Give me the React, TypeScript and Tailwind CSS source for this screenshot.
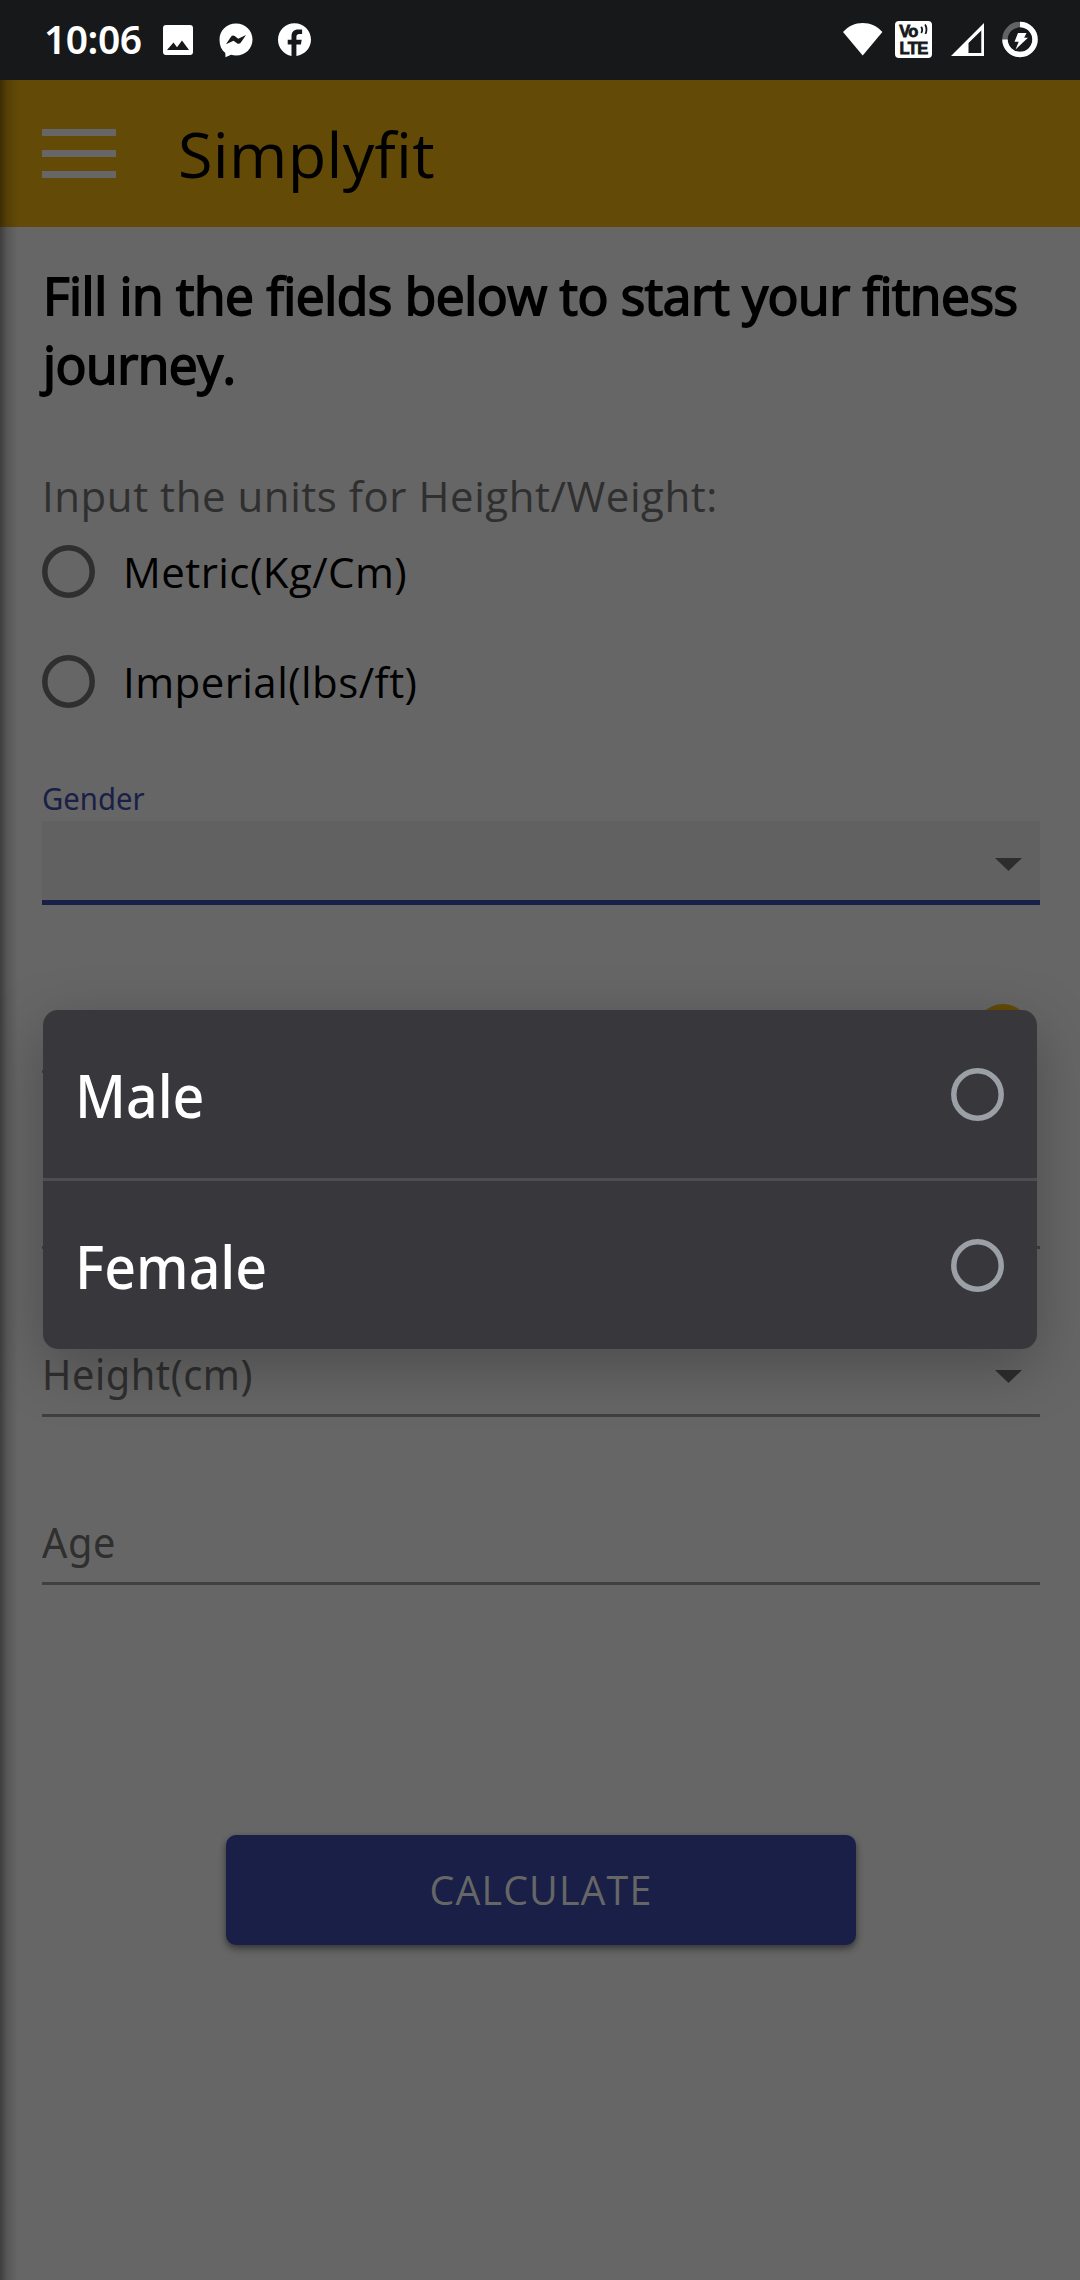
import React from "react";

function StatusBar() {
  return (
    <header className="flex h-[80px] items-start justify-between bg-[#16181a] pl-[44px] pr-[42px] text-white">
      <div className="flex items-start">
        <span className="w-[119px] whitespace-nowrap font-['Noto_Sans'] text-[39px] font-semibold leading-[78px] tracking-[-0.5px]">10:06</span>
        <svg className="mt-[25px]" width="30" height="30" viewBox="0 0 30 30">
          <path fill="#fff" fillRule="evenodd" d="M3 0h24a3 3 0 0 1 3 3v24a3 3 0 0 1-3 3H3a3 3 0 0 1-3-3V3a3 3 0 0 1 3-3ZM4 25h22L19 15.5l-5 6.7-3.500-4.700Z" />
        </svg>
        <svg className="ml-[26px] mt-[23px]" width="34" height="35" viewBox="0 0 34 35">
          <path fill="#fff" fillRule="evenodd" d="M17 0.500C26.500 .5 33.500 7.500 33.500 16.500S26.500 32.500 17 32.500c-1.800 0-3.500-.2-5-.7L6.500 34.200l-.2-4.200C2.500 27 .5 22.500 .5 16.500 .5 7.500 7.500 .5 17 .5ZM7 21.300l5-7.600c.9-1.300 2.500-1.500 3.700-.6l3.500 2.700 7.800-3.800-5.300 7.700c-.9 1.300-2.500 1.500-3.700.6l-3.500-2.600Z" />
        </svg>
        <svg className="ml-[25px] mt-[23px]" width="33" height="34" viewBox="0 0 33 34">
          <path fill="#fff" d="M33 16.700C33 7.500 25.600.2 16.500.2S0 7.500 0 16.700c0 8 5.700 14.600 13.500 16.300V21.500H9.700v-4.700h3.800v-3.200c0-4.600 2.500-7 6.600-7h4v4.400h-2.400c-2.500 0-3.300 1.100-3.300 3v2.800h5.300l-.8 4.700h-4.500V33C26.800 31.700 33 25 33 16.700Z" />
        </svg>
      </div>
      <div className="flex items-start">
        <svg className="mt-[22px]" width="40" height="34" viewBox="0 0 40 34">
          <path fill="#fff" d="M0 10C5.500 4 12 1 19.700 1S34 4 39.400 10L19.700 33.500Z" />
        </svg>
        <div className="ml-[12px] mt-[21px] flex h-[37px] w-[37px] flex-col items-center rounded-[4px] bg-white pt-px font-['Liberation_Sans'] text-[16.5px] font-bold leading-[18px] text-[#16181a] [-webkit-text-stroke:0.8px_#16181a]">
          <span className="flex h-[17px] items-center gap-[2px] tracking-[-0.8px]">
            Vo
            <svg className="-mt-[3px]" width="8" height="10" viewBox="0 0 7 9" fill="none" stroke="#16181a" strokeWidth="1.600">
              <path d="M1 2.500q1.700 3 0 5.500M4.500 .5q2.300 4 .3 8.500" />
            </svg>
          </span>
          <span className="h-[18px] tracking-[-0.6px]">LTE</span>
        </div>
        <svg className="ml-[19px] mt-[23px]" width="33" height="33" viewBox="0 0 33 33">
          <path fill="#fff" fillRule="evenodd" d="M33 0v33H0ZM30.300 7.500L17.500 20v10h12.800Z" />
        </svg>
        <svg className="ml-[18px] mt-[21px]" width="36" height="37" viewBox="0 0 36 37">
          <circle cx="18" cy="18.500" r="15" fill="none" stroke="#626365" strokeWidth="5.500" />
          <path d="M18 3.500a15 15 0 1 1-15 15" fill="none" stroke="#fff" strokeWidth="5.500" />
          <path fill="#fff" d="M16 12h8.500l-2.300 4.700H26L13.500 28.500l3.200-7.700H12.500Z" />
        </svg>
      </div>
    </header>
  );
}

function Caret({ className = "" }: { className?: string }) {
  return (
    <svg className={className} width="27" height="13" viewBox="0 0 27 13">
      <path fill="#2d2d2d" d="M0 0h27L13.500 13Z" />
    </svg>
  );
}

function Ring({ className }: { className: string }) {
  return (
    <svg className={className} width="53" height="53" viewBox="0 0 53 53" fill="none" stroke="currentColor" strokeWidth="5.500">
      <circle cx="26.500" cy="26.500" r="23.700" />
    </svg>
  );
}

function UnitOption({ label }: { label: string }) {
  return (
    <label className="flex h-[110px] items-center">
      <Ring className="text-[#2f2f2f]" />
      <span className="ml-[28px] pt-[2px] text-[42px] leading-[60px] tracking-[0.45px] text-black">{label}</span>
    </label>
  );
}

function Field({ label, caret = false }: { label: string; caret?: boolean }) {
  return (
    <div className="flex h-[168px] items-end justify-between border-b-[3px] border-[#404040]">
      <span className="origin-left scale-x-[0.945] pb-[16px] font-['Noto_Sans'] text-[42px] leading-[48px] tracking-[0.6px] text-[#2f2f2f]">{label}</span>
      {caret && <Caret className="mb-[31px] mr-[18px]" />}
    </div>
  );
}

function GenderOption({ label }: { label: string }) {
  return (
    <div className="flex h-[168px] items-center justify-between pl-[32px] pr-[33px]">
      <span className="origin-left scale-x-[0.94] pt-[2px] font-['Noto_Sans'] text-[59px] font-medium leading-[80px] text-white">{label}</span>
      <Ring className="text-[#9aa0a6]" />
    </div>
  );
}

export default function App() {
  return (
    <div className="relative h-[2280px] w-[1080px] overflow-hidden bg-[#666666] font-['Open_Sans',sans-serif]">
      <StatusBar />
      <nav className="flex h-[147px] items-center bg-[#634a07] pl-[42px]">
        <div className="flex w-[74px] flex-col gap-[14px]">
          <span className="h-[7px] bg-[#666666]" />
          <span className="h-[7px] bg-[#666666]" />
          <span className="h-[7px] bg-[#666666]" />
        </div>
        <h1 className="ml-[62px] text-[63px] leading-[84px] tracking-[0.3px] text-black">Simplyfit</h1>
      </nav>
      <main className="flex flex-col px-[42px] pr-[40px] pt-[33px]">
        <h2 className="pl-px pt-px text-[51.5px] leading-[69px] tracking-[-0.48px] text-black [-webkit-text-stroke:1.8px_black]">
          Fill in the fields below to start your fitness journey.
        </h2>
        <p className="mt-[77px] text-[42px] leading-[40px] tracking-[0.55px] text-[#2f2f2f]">Input the units for Height/Weight:</p>
        <UnitOption label="Metric(Kg/Cm)" />
        <UnitOption label="Imperial(lbs/ft)" />
        <span className="mt-[42px] origin-left scale-x-[0.93] self-start font-['Noto_Sans'] text-[31.5px] leading-[40px] text-[#191f47]">Gender</span>
        <div className="mt-[3px] flex h-[84px] items-start justify-end border-b-[5px] border-[#191f47] bg-[#616161] pr-[18px] pt-[37px]">
          <Caret />
        </div>
        <div className="flex h-[168px] justify-between">
          <div className="w-[900px] border-b-[3px] border-[#404040]" />
          <div className="mr-[9px] mt-[99px] h-[56px] w-[56px] rounded-full bg-[#634a07]" />
        </div>
        <div className="h-[176px] border-b-[3px] border-[#404040]" />
        <Field label="Height(cm)" caret />
        <Field label="Age" />
        <button className="ml-[184px] mt-[250px] h-[110px] w-[630px] rounded-[10px] bg-[#191f47] text-[39.4px] leading-[110px] tracking-[1.1px] text-[#666666] shadow-[0_3px_6px_rgba(0,0,0,0.4),0_5px_10px_rgba(0,0,0,0.12)]">
          CALCULATE
        </button>
      </main>
      <div className="absolute bottom-0 left-0 top-[80px] w-[18px] bg-gradient-to-r from-black/40 via-black/15 via-40% to-transparent" />
      <div className="absolute left-[43px] top-[1010px] h-[339px] w-[994px] rounded-[15px] bg-[#38373c] shadow-[0_18px_60px_rgba(0,0,0,0.26)]">
        <GenderOption label="Male" />
        <div className="h-[3px] bg-[#4e4d53]" />
        <GenderOption label="Female" />
      </div>
    </div>
  );
}
